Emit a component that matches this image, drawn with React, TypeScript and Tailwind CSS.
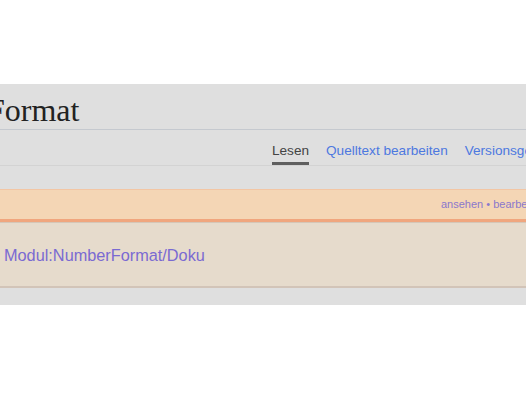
export default function App() {
  return (
    <div className="w-[526px] h-[394px] bg-white overflow-hidden">
      <div className="h-[84px]" />
      <div className="bg-[#dfdfdf] h-[221px] overflow-hidden">
        {/* title */}
        <div className="h-[46px] border-b border-[#c5c9cf] flex items-end overflow-hidden">
          <h1 className="ml-[-13px] pb-[3px] text-[32px] leading-none text-[#222] whitespace-nowrap font-['Liberation_Serif',serif]">
            Format
          </h1>
        </div>
        {/* tabs */}
        <div className="h-[36px] border-b border-[#d3d3d3] flex items-end pl-[272px] gap-[17px] text-[13.6px] whitespace-nowrap font-['Liberation_Sans',sans-serif]">
          <span className="text-[#444] pb-[4px] border-b-[3px] border-[#5f5f5f] leading-none">Lesen</span>
          <span className="text-[#4d78e0] pb-[7px] leading-none">Quelltext bearbeiten</span>
          <span className="text-[#4d78e0] pb-[7px] leading-none">Versionsgeschichte</span>
        </div>
        {/* doc box */}
        <div className="mt-[23px] border-t border-[#f3c6a4] bg-[#f4d6b5] h-[30px] flex items-center pl-[441px] text-[11px] text-[#8a78cc] whitespace-nowrap font-['Liberation_Sans',sans-serif]">
          <span>ansehen • bearbeiten</span>
        </div>
        <div className="h-[3px] bg-[#f0a67e]" />
        <div className="bg-[#e6dbcc] border-t border-[#d5c6b7] border-b-2 border-b-[#d2c4b8] h-[66px] flex items-center pl-[4px] pt-[2px] text-[16.3px] text-[#7a6ad2] font-['Liberation_Sans',sans-serif]">
          Modul:NumberFormat/Doku
        </div>
      </div>
    </div>
  );
}
